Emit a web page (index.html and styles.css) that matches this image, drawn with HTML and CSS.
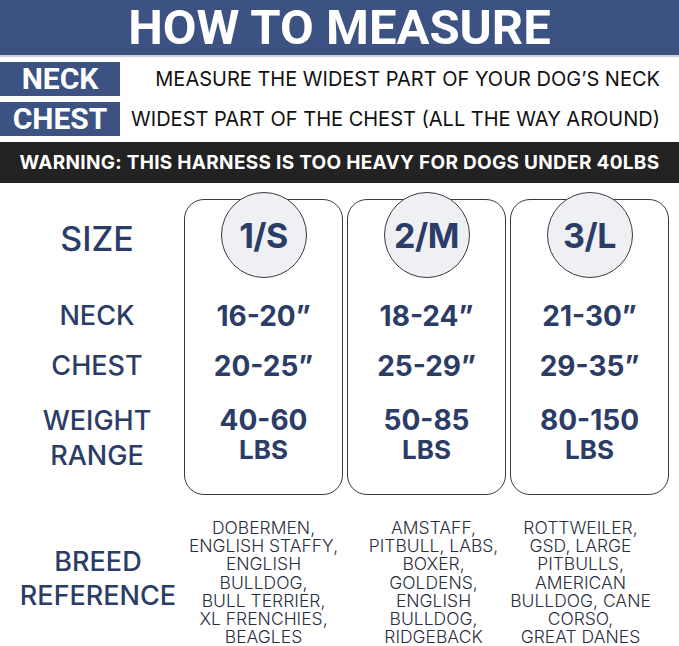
FILE: index.html
```html
<!DOCTYPE html>
<html lang="en">
<head>
<meta charset="utf-8">
<title>How to Measure</title>
<link rel="stylesheet" href="styles.css">
</head>
<body>
<div class="page">
  <header class="hero"><h1 class="hero-title">HOW TO MEASURE</h1></header>
  <div class="measure-rows">
    <div class="measure-row">
      <div class="tag">NECK</div>
      <div class="desc desc-neck">MEASURE THE WIDEST PART OF YOUR DOG’S NECK</div>
    </div>
    <div class="measure-row">
      <div class="tag">CHEST</div>
      <div class="desc desc-chest">WIDEST PART OF THE CHEST (ALL THE WAY AROUND)</div>
    </div>
  </div>
  <div class="warning">WARNING: THIS HARNESS IS TOO HEAVY FOR DOGS UNDER 40LBS</div>

  <div class="table">
    <div class="card c1"></div>
    <div class="card c2"></div>
    <div class="card c3"></div>

    <div class="label size-label r1">SIZE</div>
    <div class="circle-cell c1 r1"><div class="circle">1/S</div></div>
    <div class="circle-cell c2 r1"><div class="circle">2/M</div></div>
    <div class="circle-cell c3 r1"><div class="circle">3/L</div></div>

    <div class="label mid r2">NECK</div>
    <div class="value mid c1 r2">16-20”</div>
    <div class="value mid c2 r2">18-24”</div>
    <div class="value mid c3 r2">21-30”</div>

    <div class="label mid r3">CHEST</div>
    <div class="value mid c1 r3">20-25”</div>
    <div class="value mid c2 r3">25-29”</div>
    <div class="value mid c3 r3">29-35”</div>

    <div class="label weight-label r4">WEIGHT<br>RANGE</div>
    <div class="value weight c1 r4">40-60<br><span class="lbs">LBS</span></div>
    <div class="value weight c2 r4">50-85<br><span class="lbs">LBS</span></div>
    <div class="value weight c3 r4">80-150<br><span class="lbs">LBS</span></div>

    <div class="label breed-label r5">BREED<br>REFERENCE</div>
    <div class="breed c1 r5">DOBERMEN,<br>ENGLISH STAFFY,<br>ENGLISH<br>BULLDOG,<br>BULL TERRIER,<br>XL FRENCHIES,<br>BEAGLES</div>
    <div class="breed b2 c2 r5">AMSTAFF,<br>PITBULL, LABS,<br>BOXER,<br>GOLDENS,<br>ENGLISH<br>BULLDOG,<br>RIDGEBACK</div>
    <div class="breed b3 c3 r5">ROTTWEILER,<br>GSD, LARGE<br>PITBULLS,<br>AMERICAN<br>BULLDOG, CANE<br>CORSO,<br>GREAT DANES</div>
  </div>
</div>
</body>
</html>
```

FILE: styles.css
```css
* { box-sizing: border-box; }
html, body { margin: 0; padding: 0; background: #ffffff; }
.page {
  width: 679px;
  height: 646px;
  overflow: hidden;
  font-family: "Inter", "DejaVu Sans", sans-serif;
  color: #2b3c66;
}

.hero {
  height: 57px;
  background: #3b5283;
  border-bottom: 2px solid #c9d1de;
  display: flex;
  align-items: center;
  justify-content: center;
}
.hero-title {
  margin: 0;
  font-family: "Roboto", sans-serif;
  font-weight: 700;
  font-size: 49px;
  line-height: 1;
  color: #ffffff;
  letter-spacing: 0;
}

.measure-rows {
  display: flex;
  flex-direction: column;
  gap: 6px;
  padding-top: 5px;
}
.measure-row {
  display: flex;
  align-items: center;
  height: 34px;
}
.tag {
  width: 120px;
  height: 34px;
  background: #3b5283;
  color: #ffffff;
  font-family: "Roboto", sans-serif;
  font-weight: 700;
  font-size: 30px;
  line-height: 34px;
  text-align: center;
}
.desc {
  flex: 1;
  text-align: right;
  padding-right: 19px;
  color: #111111;
  font-size: 20px;
  font-weight: 400;
  letter-spacing: 0;
}

.warning {
  margin-top: 6px;
  height: 41px;
  background: #222222;
  color: #ffffff;
  font-weight: 700;
  font-size: 19px;
  letter-spacing: 0.3px;
  line-height: 41px;
  text-align: center;
}

.table {
  display: grid;
  grid-template-columns: 184px 163px 163px 169px;
  grid-template-rows: 92px 50px 50px 104px auto;
  padding-top: 16px;
}
.c1 { grid-column: 2; }
.c2 { grid-column: 3; }
.c3 { grid-column: 4; }
.r1 { grid-row: 1; }
.r2 { grid-row: 2; }
.r3 { grid-row: 3; }
.r4 { grid-row: 4; }
.r5 { grid-row: 5; }

.card {
  grid-row: 1 / 5;
  width: 159px;
  border: 1px solid #3a3a3a;
  border-radius: 20px;
}

.label {
  grid-column: 1;
  padding-left: 10px;
  text-align: center;
  font-weight: 500;
  color: #2b3c66;
}
.size-label {
  align-self: start;
  margin-top: 20px;
  font-size: 34px;
  line-height: 40px;
}
.mid {
  align-self: center;
  font-size: 27px;
  line-height: 34px;
}
.weight-label {
  align-self: start;
  margin-top: 12px;
  font-size: 27px;
  line-height: 35px;
}
.breed-label {
  align-self: center;
  margin-top: 16px;
  font-size: 27px;
  line-height: 34px;
  padding-left: 12px;
}

.circle-cell {
  width: 159px;
  align-self: start;
  margin-top: -7px;
  display: flex;
  justify-content: center;
}
.circle {
  width: 86px;
  height: 86px;
  border-radius: 50%;
  background: #eef0f4;
  border: 1px solid #3a3a3a;
  display: flex;
  align-items: center;
  justify-content: center;
  font-weight: 700;
  font-size: 34px;
  letter-spacing: -0.5px;
  color: #2b3c66;
}

.value {
  width: 159px;
  text-align: center;
  font-weight: 700;
  color: #2b3c66;
}
.value.mid { font-size: 28px; }
.weight {
  align-self: start;
  margin-top: 15px;
  font-size: 28px;
  line-height: 29px;
}
.lbs { font-size: 26px; }

.breed {
  width: 159px;
  margin-top: 24px;
  text-align: center;
  font-size: 17.5px;
  font-weight: 300;
  line-height: 18.2px;
  color: #2a2f3d;
}
.b2 { margin-left: 7px; }
.b3 { margin-left: -9px; }
```
